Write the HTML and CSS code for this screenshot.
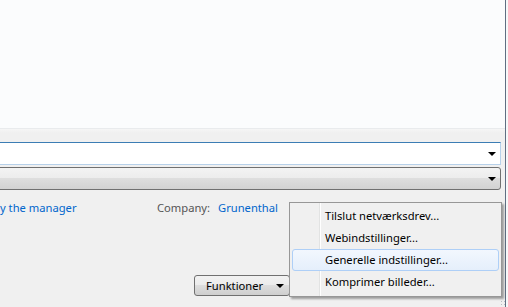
FILE: index.html
```html
<!DOCTYPE html>
<html>

<head>
  <meta charset="UTF-8">
  <link rel="stylesheet" href="styles.css">
</head>

<body>
  <div class="window">
    <div class="main">
      <div class="preview"></div>
      <div class="band"></div>

      <div class="fields">
        <div class="textbox">
          <span class="arrow"></span>
        </div>
        <div class="combo">
          <span class="arrow"></span>
        </div>
      </div>

      <div class="info">
        <span class="link owner">y the manager</span>
        <span class="label">Company:</span>
        <span class="link">Grunenthal</span>
      </div>

      <div class="buttons">
        <div class="button tools">
          <span>Funktioner</span>
          <span class="arrow"></span>
        </div>
        <div class="button default"></div>
        <div class="button"></div>
      </div>
    </div>
    <div class="grip"></div>
  </div>

  <div class="menu">
    <div class="menu-item">Tilslut netværksdrev...</div>
    <div class="menu-item">Webindstillinger...</div>
    <div class="menu-item active">Generelle indstillinger...</div>
    <div class="menu-item">Komprimer billeder...</div>
  </div>
</body>

</html>
```

FILE: styles.css
```css
* {
  margin: 0;
  padding: 0;
  box-sizing: border-box;
}

body {
  width: 508px;
  height: 307px;
  overflow: hidden;
  font-family: 'Noto Sans', 'Open Sans', sans-serif;
  font-size: 11.2px;
  color: #000;
  background: #f7f8f9;
  position: relative;
}

.window {
  display: flex;
  height: 307px;
}

.main {
  width: 506px;
  height: 307px;
  background: #f0f0f0;
  border-right: 1px solid #5f6f82;
  overflow: hidden;
}

.preview {
  height: 129px;
  background: #fbfcfd;
  border-bottom: 1px solid #e9ebed;
}

.band {
  height: 13px;
  background: linear-gradient(#f6f6f6, #f0f0f0 4px);
}

.fields {
  display: flex;
  flex-direction: column;
  gap: 2px;
  margin-left: -10px;
  width: 511px;
}

.textbox {
  height: 23px;
  background: #fff;
  border: 1px solid #b7d1ea;
  border-top-color: #3c7db4;
  display: flex;
  align-items: center;
  justify-content: flex-end;
  padding-right: 3px;
}

.combo {
  height: 23px;
  background: linear-gradient(#f3f3f3, #ececec 50%, #dedede 50%, #d2d2d2);
  border: 1px solid #707070;
  border-radius: 3px;
  display: flex;
  align-items: center;
  justify-content: flex-end;
  padding-right: 3px;
}

.arrow {
  width: 0;
  height: 0;
  border-left: 4px solid transparent;
  border-right: 4px solid transparent;
  border-top: 4px solid #000;
  margin-right: 1px;
}

.info {
  display: flex;
  align-items: center;
  height: 20px;
  margin-top: 7px;
  white-space: nowrap;
}

.link {
  color: #0066cc;
}

.owner {
  width: 157px;
}

.label {
  color: #555;
  width: 61px;
}

.buttons {
  display: flex;
  gap: 14px;
  margin-top: 58px;
  padding-left: 194px;
}

.button {
  width: 96px;
  height: 21px;
  border: 1px solid #707070;
  border-radius: 3px;
  background: linear-gradient(#f2f2f2, #ebebeb 50%, #dddddd 50%, #cfcfcf);
}

.button.default {
  width: 85px;
  border-color: #3c7fb1;
}

.tools {
  display: flex;
  align-items: center;
  justify-content: space-between;
  padding: 0 4px 0 11px;
}

.grip {
  position: absolute;
  right: 2px;
  bottom: 1px;
  width: 6px;
  height: 6px;
  background: radial-gradient(circle, #b8bcc2 0.8px, transparent 1px) 0 0 / 3px 3px;
}

.menu {
  position: absolute;
  left: 289px;
  top: 202px;
  width: 213px;
  height: 95px;
  padding: 2px;
  border: 1px solid #979797;
  background: linear-gradient(to right, #f0f0f0 29px, #e2e3e3 29px, #e2e3e3 30px, #fff 30px, #fff 31px, #f0f0f0 31px);
  box-shadow: 2px 2px 2px rgba(0, 0, 0, 0.35);
}

.menu-item {
  height: 22px;
  line-height: 20px;
  padding-left: 32px;
  border: 1px solid transparent;
  border-radius: 3px;
  white-space: nowrap;
}

.menu-item.active {
  border-color: #aecff7;
  background: linear-gradient(#f2f7fe, #e5effb);
}
```
